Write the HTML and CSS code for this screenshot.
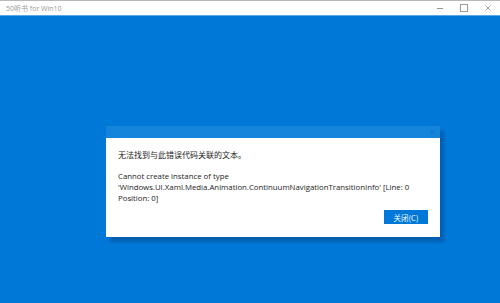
FILE: index.html
```html
<!DOCTYPE html>
<html lang="zh-CN">
<head>
    <meta charset="UTF-8">
    <meta name="viewport" content="width=device-width, initial-scale=1.0">
    <title>50听书 for Win10</title>
    <link rel="stylesheet" href="styles.css">
</head>
<body>
    <div class="titlebar">
        <span class="app-title">50听书 for Win10</span>
        <div class="controls">
            <span class="ctl ctl-min"></span>
            <span class="ctl ctl-max"></span>
            <span class="ctl ctl-close">
                <svg width="6" height="6" viewBox="0 0 6 6"><path d="M0.5 0.5 L5.5 5.5 M5.5 0.5 L0.5 5.5" stroke="#8a8a8a" stroke-width="0.8" fill="none"/></svg>
            </span>
        </div>
    </div>

    <div class="stage">
        <div class="dialog">
            <div class="dialog-head">
                <svg class="head-close" width="5" height="5" viewBox="0 0 5 5"><path d="M0.5 0.5 L4.5 4.5 M4.5 0.5 L0.5 4.5" stroke="#1565b0" stroke-width="0.8" fill="none"/></svg>
            </div>
            <div class="dialog-body">
                <p class="msg">无法找到与此错误代码关联的文本。</p>
                <p class="msg detail">Cannot create instance of type 'Windows.UI.Xaml.Media.Animation.ContinuumNavigationTransitionInfo' [Line: 0 Position: 0]</p>
                <div class="actions">
                    <button class="btn-close">关闭(C)</button>
                </div>
            </div>
        </div>
    </div>
</body>
</html>
```

FILE: styles.css
```css
* {
    margin: 0;
    padding: 0;
    box-sizing: border-box;
}

body {
    font-family: 'Open Sans', 'Noto Sans CJK SC', sans-serif;
    background: #0078d7;
    width: 500px;
    height: 303px;
    overflow: hidden;
}

.titlebar {
    height: 16px;
    background: #fff;
    border-top: 1px solid #b9b9b9;
    border-bottom: 1px solid #5aa7e6;
    display: flex;
    align-items: center;
    justify-content: space-between;
}

.app-title {
    font-size: 7px;
    color: #9a9a9a;
    padding-left: 6px;
}

.controls {
    display: flex;
    height: 100%;
}

.ctl {
    width: 24px;
    display: flex;
    align-items: center;
    justify-content: center;
}

.ctl-min::before {
    content: '';
    width: 6px;
    height: 1px;
    background: #999;
}

.ctl-max::before {
    content: '';
    width: 6px;
    height: 6px;
    border: 1px solid #999;
}

.stage {
    padding: 110px 0 0 106px;
}

.dialog {
    width: 334px;
    box-shadow: 4px 5px 3px rgba(0, 40, 90, 0.3);
}

.dialog-head {
    height: 12px;
    background: #1585dc;
    display: flex;
    align-items: center;
    justify-content: flex-end;
    padding-right: 5px;
}

.dialog-body {
    background: #fff;
    padding: 11px 12px 13px 12px;
}

.msg {
    font-size: 8px;
    line-height: 11px;
    color: #1b1b1b;
}

.detail {
    margin-top: 11px;
    width: 300px;
    font-size: 7.8px;
}

.actions {
    display: flex;
    justify-content: flex-end;
    margin-top: 6px;
}

.btn-close {
    width: 44px;
    height: 14px;
    border: none;
    background: #0078d7;
    color: #fff;
    font-family: 'Noto Sans CJK SC', sans-serif;
    font-size: 7.5px;
}
```
